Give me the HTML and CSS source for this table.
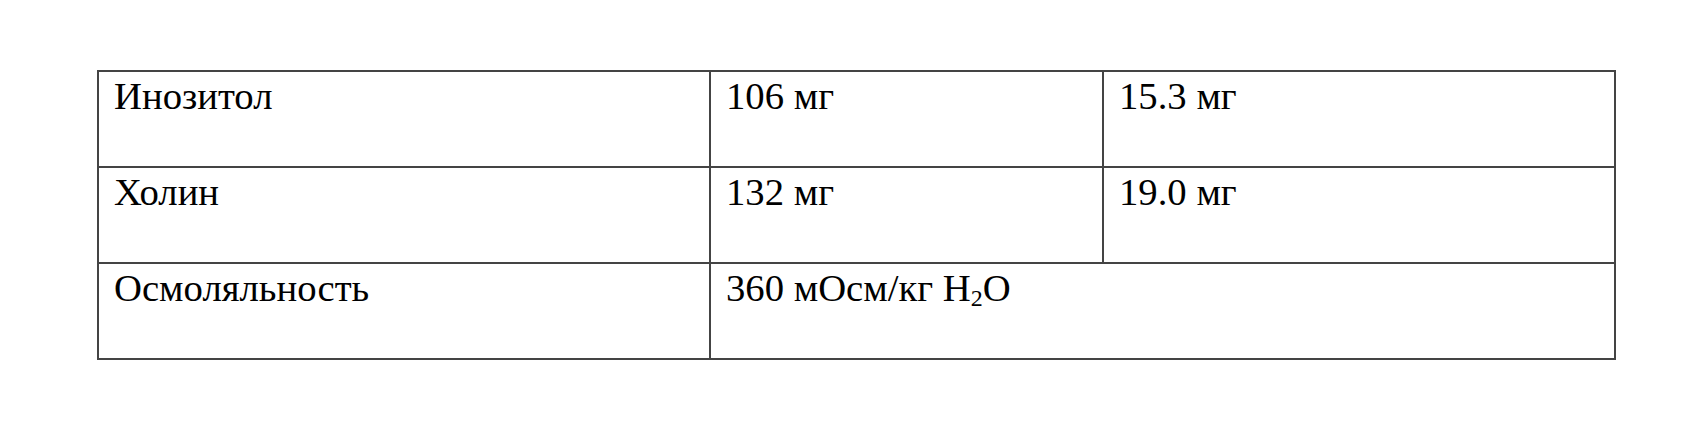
FILE: index.html
```html
<!DOCTYPE html>
<html lang="ru">
<head>
<meta charset="utf-8">
<link rel="stylesheet" href="styles.css">
</head>
<body>
<table class="nutr">
  <colgroup>
    <col class="c1">
    <col class="c2">
    <col class="c3">
  </colgroup>
  <tr>
    <td>Инозитол</td>
    <td>106 мг</td>
    <td>15.3 мг</td>
  </tr>
  <tr>
    <td>Холин</td>
    <td>132 мг</td>
    <td>19.0 мг</td>
  </tr>
  <tr>
    <td>Осмоляльность</td>
    <td colspan="2">360 мОсм/кг H<sub class="sub">2</sub>O</td>
  </tr>
</table>
</body>
</html>
```
FILE: styles.css
```css
html, body {
  margin: 0;
  padding: 0;
  background: #ffffff;
}

body {
  padding: 70px 0 0 97px;
  font-family: "Liberation Serif", "Times New Roman", serif;
  color: #000000;
}

.nutr {
  border-collapse: collapse;
  table-layout: fixed;
  width: 1517px;
}

.c1 { width: 612px; }
.c2 { width: 393px; }
.c3 { width: 512px; }

.nutr td {
  border: 2px solid #444444;
  height: 96px;
  box-sizing: border-box;
  padding: 3px 15px 0 15px;
  vertical-align: top;
  font-size: 38.7px;
  line-height: 1.13;
}

.sub {
  font-size: 0.62em;
  vertical-align: -0.2em;
  line-height: 0;
}
```
